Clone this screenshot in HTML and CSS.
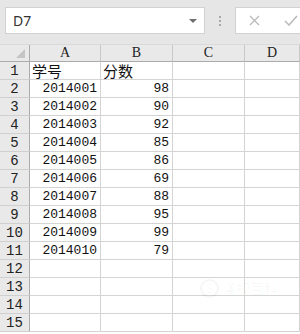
FILE: index.html
```html
<!DOCTYPE html>
<html lang="zh-CN">
<head>
    <meta charset="UTF-8">
    <title>Sheet</title>
    <link rel="stylesheet" href="styles.css">
</head>
<body>
    <div class="formula-bar">
        <div class="name-box">
            <span class="name-text">D7</span>
            <svg class="name-arrow" width="8" height="4" viewBox="0 0 8 4"><path d="M0 0h8L4 4z" fill="#6f6f6f"/></svg>
        </div>
        <div class="grip"><i></i><i></i><i></i></div>
        <div class="edit-box">
            <svg class="btn-icon" width="11" height="11" viewBox="0 0 11 11"><path d="M1 1l9 9M10 1l-9 9" stroke="#b9b9b9" stroke-width="1.3" fill="none"/></svg>
            <svg class="btn-icon check" width="14" height="11" viewBox="0 0 14 11"><path d="M1 6l4 4 8-9" stroke="#b9b9b9" stroke-width="1.5" fill="none"/></svg>
        </div>
    </div>

    <div class="sheet">
        <div class="head corner">
            <svg width="9" height="9" viewBox="0 0 9 9"><path d="M9 0v9H0z" fill="#c4c4c4"/></svg>
        </div>
        <div class="head col">A</div>
        <div class="head col">B</div>
        <div class="head col">C</div>
        <div class="head col">D</div>

        <div class="head row">1</div>
        <div class="cell cjk">学号</div>
        <div class="cell cjk">分数</div>
        <div class="cell"></div>
        <div class="cell"></div>

        <div class="head row">2</div><div class="cell num">2014001</div><div class="cell num">98</div><div class="cell"></div><div class="cell"></div>
        <div class="head row">3</div><div class="cell num">2014002</div><div class="cell num">90</div><div class="cell"></div><div class="cell"></div>
        <div class="head row">4</div><div class="cell num">2014003</div><div class="cell num">92</div><div class="cell"></div><div class="cell"></div>
        <div class="head row">5</div><div class="cell num">2014004</div><div class="cell num">85</div><div class="cell"></div><div class="cell"></div>
        <div class="head row">6</div><div class="cell num">2014005</div><div class="cell num">86</div><div class="cell"></div><div class="cell"></div>
        <div class="head row">7</div><div class="cell num">2014006</div><div class="cell num">69</div><div class="cell"></div><div class="cell"></div>
        <div class="head row">8</div><div class="cell num">2014007</div><div class="cell num">88</div><div class="cell"></div><div class="cell"></div>
        <div class="head row">9</div><div class="cell num">2014008</div><div class="cell num">95</div><div class="cell"></div><div class="cell"></div>
        <div class="head row">10</div><div class="cell num">2014009</div><div class="cell num">99</div><div class="cell"></div><div class="cell"></div>
        <div class="head row">11</div><div class="cell num">2014010</div><div class="cell num">79</div><div class="cell"></div><div class="cell"></div>
        <div class="head row">12</div><div class="cell"></div><div class="cell"></div><div class="cell"></div><div class="cell"></div>
        <div class="head row">13</div><div class="cell"></div><div class="cell"></div><div class="cell"></div><div class="cell"></div>
        <div class="head row">14</div><div class="cell"></div><div class="cell"></div><div class="cell"></div><div class="cell"></div>
        <div class="head row">15</div><div class="cell"></div><div class="cell"></div><div class="cell"></div><div class="cell"></div>
    </div>

    <div class="watermark"><span class="wm-logo">S</span>懂视百科</div>
</body>
</html>
```

FILE: styles.css
```css
html, body {
    margin: 0;
    padding: 0;
}

body {
    width: 300px;
    height: 334px;
    overflow: hidden;
    background: #fff;
    position: relative;
    font-family: "Liberation Mono", monospace;
    color: #111;
}

.formula-bar {
    height: 45px;
    box-sizing: border-box;
    padding: 7px 0 0 5px;
    background: #e6e6e6;
    border-bottom: 1px solid #dadada;
    display: flex;
    align-items: flex-start;
}

.name-box {
    width: 200px;
    height: 27px;
    box-sizing: border-box;
    background: #fff;
    border: 1px solid #d2d2d2;
    display: flex;
    align-items: center;
    padding: 0 7px 0 7px;
}

.name-text {
    flex: 1;
    font-family: "Noto Sans", sans-serif;
    font-size: 14px;
    color: #333;
}

.name-arrow {
    margin-right: 0;
}

.grip {
    width: 30px;
    height: 27px;
    display: flex;
    flex-direction: column;
    align-items: center;
    justify-content: center;
    gap: 2px;
}

.grip i {
    width: 2px;
    height: 2px;
    background: #a9a9a9;
}

.edit-box {
    flex: 1;
    height: 27px;
    box-sizing: border-box;
    background: #fff;
    border: 1px solid #d2d2d2;
    border-right: none;
    display: flex;
    align-items: center;
    padding-left: 13px;
    gap: 24px;
}

.sheet {
    display: grid;
    grid-template-columns: 30px 71px 72px 72px 1fr;
    grid-template-rows: 17px;
    grid-auto-rows: 18px;
}

.head {
    background: #e9e9e9;
    box-sizing: border-box;
    border-right: 1px solid #c8c8c8;
    border-bottom: 1px solid #c8c8c8;
    display: flex;
    align-items: center;
    justify-content: center;
    font-size: 13px;
    color: #222;
}

.corner {
    justify-content: flex-end;
    align-items: flex-end;
    padding: 0 4px 3px 0;
    border-right-color: #ababab;
    border-bottom-color: #ababab;
}

.col {
    font-family: "Liberation Serif", serif;
    font-size: 14px;
    border-bottom-color: #ababab;
}

.row {
    border-right-color: #ababab;
    border-bottom-color: #d0d0d0;
    font-size: 14px;
}

.cell {
    box-sizing: border-box;
    border-right: 1px solid #d4d4d4;
    border-bottom: 1px solid #d4d4d4;
    display: flex;
    align-items: center;
    padding: 0 3px 0 2px;
    white-space: nowrap;
}

.num {
    justify-content: flex-end;
    font-size: 13px;
}

.cjk {
    font-family: "Noto Sans CJK SC", sans-serif;
    font-size: 15px;
}

.watermark {
    position: absolute;
    left: 200px;
    top: 278px;
    font-family: "Noto Sans CJK SC", sans-serif;
    font-size: 14px;
    color: rgba(0, 0, 0, 0.035);
    display: flex;
    align-items: center;
    gap: 3px;
}

.wm-logo {
    width: 15px;
    height: 15px;
    border-radius: 50%;
    border: 2px solid rgba(0, 0, 0, 0.035);
    display: flex;
    align-items: center;
    justify-content: center;
    font-size: 12px;
    line-height: 1;
}
```
